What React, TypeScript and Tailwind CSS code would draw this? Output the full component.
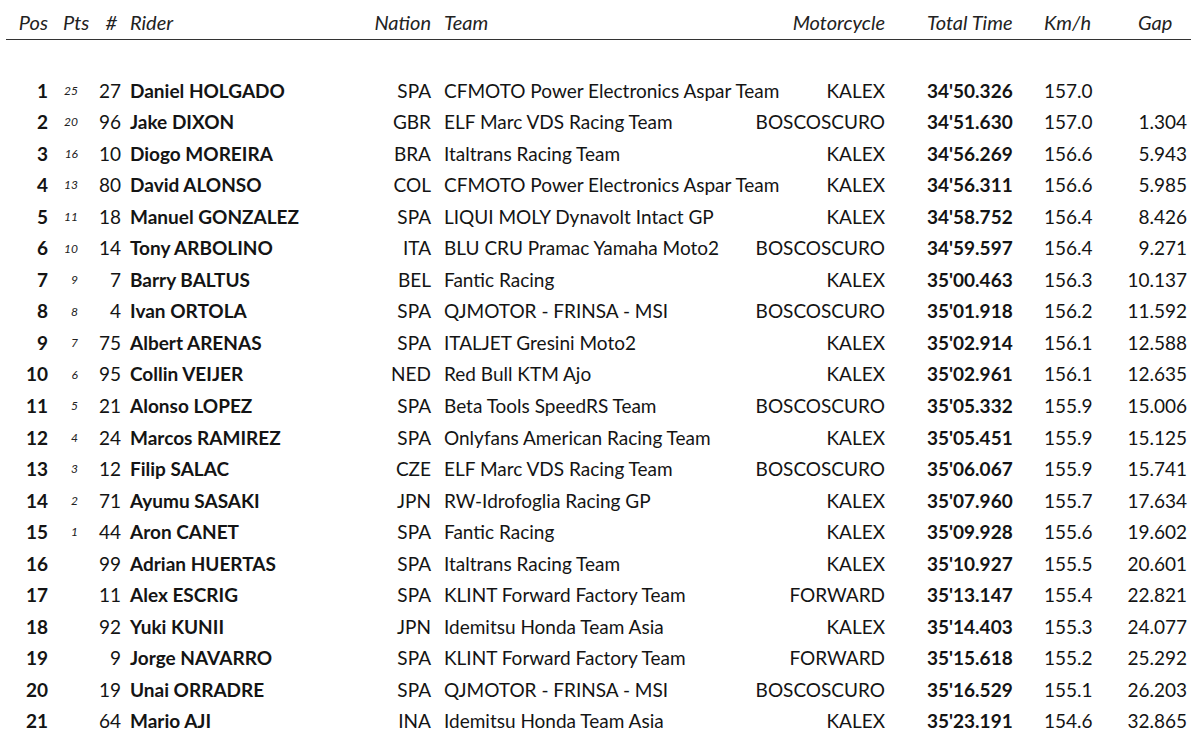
import React from "react";

type Row = [number, string, number, string, string, string, string, string, string, string];

const rows: Row[] = [
  [1, "25", 27, "Daniel HOLGADO", "SPA", "CFMOTO Power Electronics Aspar Team", "KALEX", "34'50.326", "157.0", ""],
  [2, "20", 96, "Jake DIXON", "GBR", "ELF Marc VDS Racing Team", "BOSCOSCURO", "34'51.630", "157.0", "1.304"],
  [3, "16", 10, "Diogo MOREIRA", "BRA", "Italtrans Racing Team", "KALEX", "34'56.269", "156.6", "5.943"],
  [4, "13", 80, "David ALONSO", "COL", "CFMOTO Power Electronics Aspar Team", "KALEX", "34'56.311", "156.6", "5.985"],
  [5, "11", 18, "Manuel GONZALEZ", "SPA", "LIQUI MOLY Dynavolt Intact GP", "KALEX", "34'58.752", "156.4", "8.426"],
  [6, "10", 14, "Tony ARBOLINO", "ITA", "BLU CRU Pramac Yamaha Moto2", "BOSCOSCURO", "34'59.597", "156.4", "9.271"],
  [7, "9", 7, "Barry BALTUS", "BEL", "Fantic Racing", "KALEX", "35'00.463", "156.3", "10.137"],
  [8, "8", 4, "Ivan ORTOLA", "SPA", "QJMOTOR - FRINSA - MSI", "BOSCOSCURO", "35'01.918", "156.2", "11.592"],
  [9, "7", 75, "Albert ARENAS", "SPA", "ITALJET Gresini Moto2", "KALEX", "35'02.914", "156.1", "12.588"],
  [10, "6", 95, "Collin VEIJER", "NED", "Red Bull KTM Ajo", "KALEX", "35'02.961", "156.1", "12.635"],
  [11, "5", 21, "Alonso LOPEZ", "SPA", "Beta Tools SpeedRS Team", "BOSCOSCURO", "35'05.332", "155.9", "15.006"],
  [12, "4", 24, "Marcos RAMIREZ", "SPA", "Onlyfans American Racing Team", "KALEX", "35'05.451", "155.9", "15.125"],
  [13, "3", 12, "Filip SALAC", "CZE", "ELF Marc VDS Racing Team", "BOSCOSCURO", "35'06.067", "155.9", "15.741"],
  [14, "2", 71, "Ayumu SASAKI", "JPN", "RW-Idrofoglia Racing GP", "KALEX", "35'07.960", "155.7", "17.634"],
  [15, "1", 44, "Aron CANET", "SPA", "Fantic Racing", "KALEX", "35'09.928", "155.6", "19.602"],
  [16, "", 99, "Adrian HUERTAS", "SPA", "Italtrans Racing Team", "KALEX", "35'10.927", "155.5", "20.601"],
  [17, "", 11, "Alex ESCRIG", "SPA", "KLINT Forward Factory Team", "FORWARD", "35'13.147", "155.4", "22.821"],
  [18, "", 92, "Yuki KUNII", "JPN", "Idemitsu Honda Team Asia", "KALEX", "35'14.403", "155.3", "24.077"],
  [19, "", 9, "Jorge NAVARRO", "SPA", "KLINT Forward Factory Team", "FORWARD", "35'15.618", "155.2", "25.292"],
  [20, "", 19, "Unai ORRADRE", "SPA", "QJMOTOR - FRINSA - MSI", "BOSCOSCURO", "35'16.529", "155.1", "26.203"],
  [21, "", 64, "Mario AJI", "INA", "Idemitsu Honda Team Asia", "KALEX", "35'23.191", "154.6", "32.865"],
];

export default function App() {
  return (
    <div
      className="w-[1200px] h-[734px] bg-white text-[#141414] overflow-hidden"
      style={{ fontFamily: "Lato, 'Noto Sans', sans-serif" }}
    >
      <div className="flex h-[39px] items-center pt-[5px] text-[20px] italic text-[#222] whitespace-nowrap">
        <div className="w-[48px] shrink-0 text-right">Pos</div>
        <div className="w-[30px] shrink-0 pl-[15px]">Pts</div>
        <div className="w-[43px] shrink-0 text-right pr-[4px]">#</div>
        <div className="w-[249px] shrink-0 pl-[9px]">Rider</div>
        <div className="w-[61px] shrink-0 text-right">Nation</div>
        <div className="w-[320px] shrink-0 pl-[13px]">Team</div>
        <div className="w-[134px] shrink-0 text-right">Motorcycle</div>
        <div className="w-[159px] shrink-0 pl-[42px]">Total Time</div>
        <div className="w-[56px] shrink-0">Km/h</div>
        <div className="w-[87px] shrink-0 pl-[38px]">Gap</div>
      </div>
      <div className="mx-[6px] w-[1185px] h-px bg-[#333]" />
      <div className="h-[35px]" />
      <div className="flex flex-col text-[19px]">
        {rows.map((r) => (
          <div key={r[0]} className="flex h-[31.55px] items-center whitespace-nowrap">
            <div className="w-[48px] shrink-0 text-right font-bold">{r[0]}</div>
            <div className="w-[30px] shrink-0 text-right text-[12px] italic text-[#222]">{r[1]}</div>
            <div className="w-[43px] shrink-0 text-right">{r[2]}</div>
            <div className="w-[249px] shrink-0 pl-[9px] font-bold">{r[3]}</div>
            <div className="w-[61px] shrink-0 text-right">{r[4]}</div>
            <div className="w-[320px] shrink-0 pl-[13px]">{r[5]}</div>
            <div className="w-[134px] shrink-0 text-right">{r[6]}</div>
            <div className="w-[159px] shrink-0 pl-[42px] font-bold">{r[7]}</div>
            <div className="w-[56px] shrink-0">{r[8]}</div>
            <div className="w-[87px] shrink-0 text-right">{r[9]}</div>
          </div>
        ))}
      </div>
    </div>
  );
}
